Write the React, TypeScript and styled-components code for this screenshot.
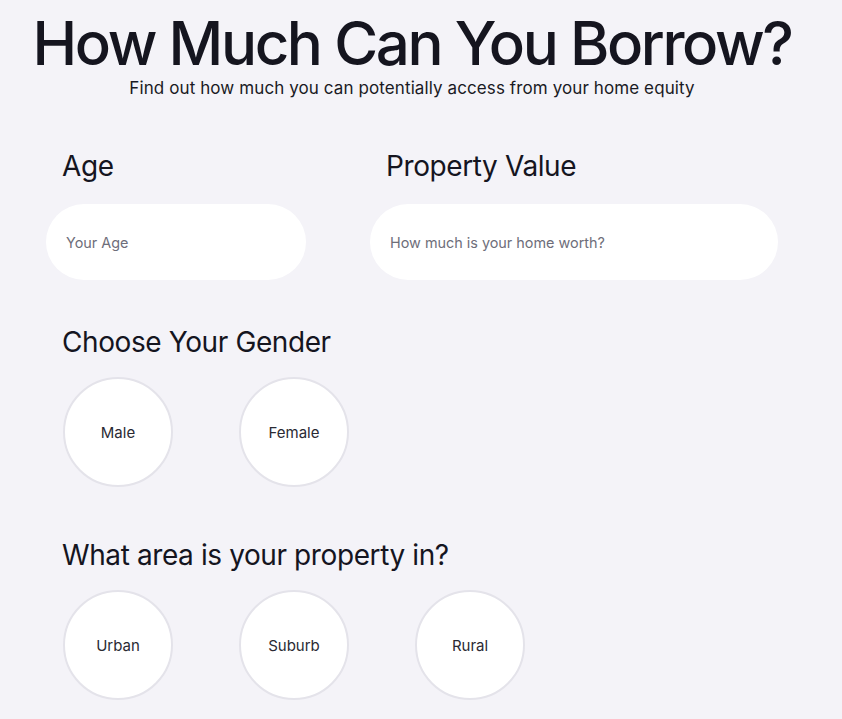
import React from "react";
import styled, { createGlobalStyle } from "styled-components";

const Global = createGlobalStyle`
  html, body { margin: 0; padding: 0; background: #f4f3f8; }
  body { font-family: Inter, "Noto Sans", sans-serif; color: #14141f; }
`;

const Page = styled.div`
  width: 824px;
  padding-top: 8px;
  box-sizing: border-box;
`;

const Title = styled.h1`
  margin: 0;
  text-align: center;
  font-size: 60px;
  line-height: 70px;
  font-weight: 500;
  letter-spacing: -2.4px;
  color: #15151f;
`;

const Subtitle = styled.p`
  margin: 0;
  text-align: center;
  font-size: 17px;
  line-height: 20px;
  color: #1a1a24;
  letter-spacing: 0.1px;
`;

const Form = styled.div`
  padding: 50px 0 0 46px;
  display: flex;
  flex-direction: column;
`;

const Row = styled.div`
  display: flex;
  gap: 64px;
`;

const Field = styled.div<{ $w: number }>`
  width: ${(p) => p.$w}px;
  display: flex;
  flex-direction: column;
`;

const Label = styled.div<{ $indent?: number }>`
  font-size: 28px;
  line-height: 36px;
  font-weight: 400;
  letter-spacing: -0.4px;
  padding-left: ${(p) => p.$indent ?? 16}px;
  color: #15151f;
`;

const Input = styled.input`
  margin-top: 20px;
  height: 76px;
  border: none;
  border-radius: 38px;
  background: #fff;
  padding: 0 20px;
  font-family: inherit;
  font-size: 14.4px;
  color: #333;
  outline: none;
  box-sizing: border-box;
  &::placeholder { color: #6e6e7a; }
`;

const Section = styled.div<{ $top: number }>`
  margin-top: ${(p) => p.$top}px;
  display: flex;
  flex-direction: column;
`;

const Circles = styled.div`
  margin-top: 17px;
  padding-left: 17px;
  display: flex;
  gap: 66px;
`;

const Circle = styled.button`
  width: 110px;
  height: 110px;
  border-radius: 50%;
  background: #fff;
  border: 2px solid #e4e3ea;
  box-sizing: border-box;
  font-family: inherit;
  font-size: 15px;
  color: #2a2a33;
  display: flex;
  align-items: center;
  justify-content: center;
  padding: 0;
  cursor: pointer;
`;

export default function App() {
  return (
    <>
      <Global />
      <Page>
        <Title>How Much Can You Borrow?</Title>
        <Subtitle>Find out how much you can potentially access from your home equity</Subtitle>
        <Form>
          <Row>
            <Field $w={260}>
              <Label>Age</Label>
              <Input placeholder="Your Age" />
            </Field>
            <Field $w={408}>
              <Label>Property Value</Label>
              <Input placeholder="How much is your home worth?" />
            </Field>
          </Row>
          <Section $top={44}>
            <Label>Choose Your Gender</Label>
            <Circles>
              <Circle>Male</Circle>
              <Circle>Female</Circle>
            </Circles>
          </Section>
          <Section $top={50}>
            <Label>What area is your property in?</Label>
            <Circles>
              <Circle>Urban</Circle>
              <Circle>Suburb</Circle>
              <Circle>Rural</Circle>
            </Circles>
          </Section>
        </Form>
      </Page>
    </>
  );
}
